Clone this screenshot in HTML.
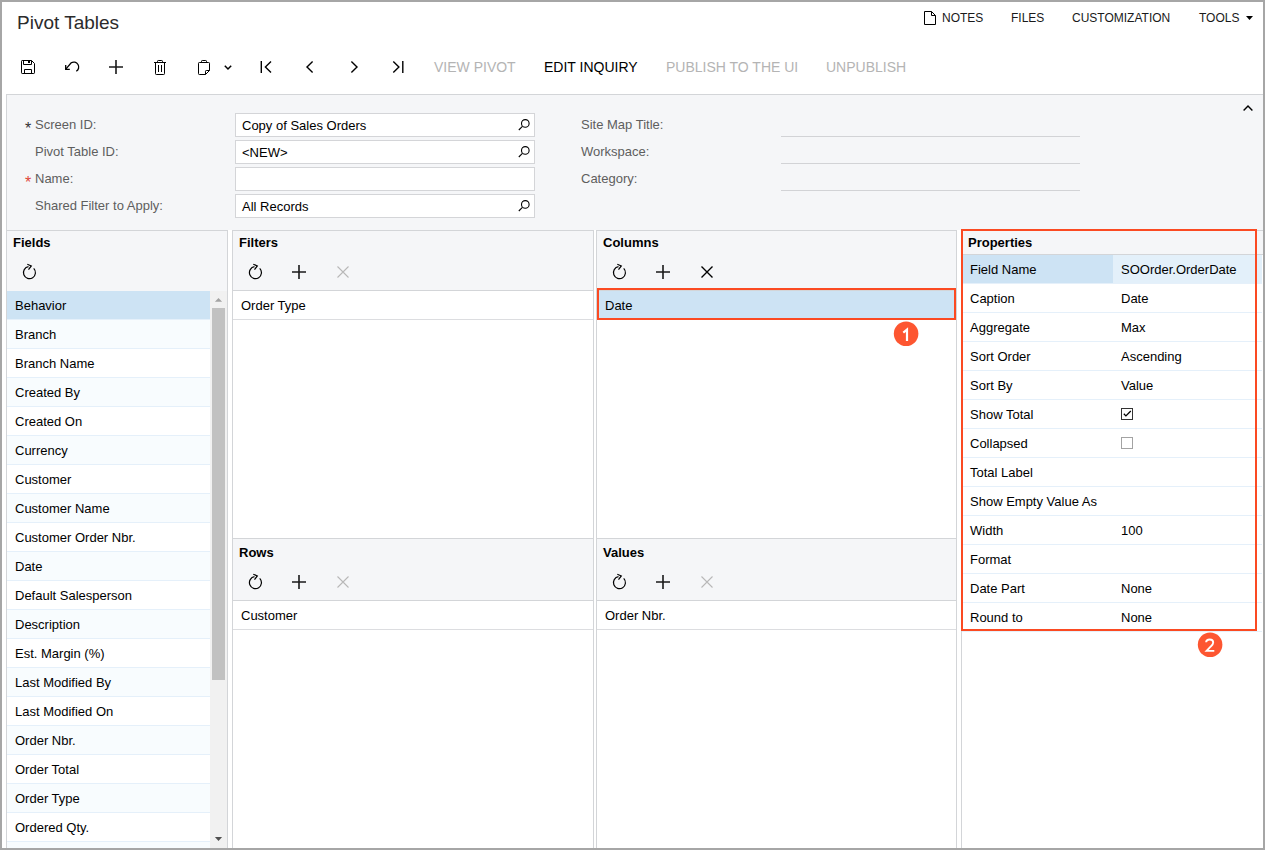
<!DOCTYPE html><html><head><meta charset="utf-8"><style>*{box-sizing:border-box;margin:0;padding:0}
html,body{width:1265px;height:850px;overflow:hidden;background:#fff}
body{position:relative;font-family:"Liberation Sans",sans-serif;font-size:13px;color:#000}
.a{position:absolute}
.t{position:absolute;white-space:pre}
#frame{position:absolute;left:0;top:0;width:1265px;height:850px;border:2px solid #a6a6a6}
.tb{font-size:14px;line-height:20px}
.dis{color:#b4b4b4}
.lnk{font-size:12px;line-height:16px;color:#1a1a1a}
.lbl{font-size:13px;line-height:17px;color:#5e5e5e}
.form{left:6px;top:94px;width:1259px;height:136px;background:#f5f6f8;border-top:1px solid #d3d5d8;border-left:1px solid #d3d5d8}
.inp{position:absolute;left:235px;width:300px;height:24px;background:#fff;border:1px solid #d4d5d8}
.inp span{position:absolute;left:6px;top:3px;line-height:17px;font-size:13px;color:#000;white-space:pre}
.ul{position:absolute;left:781px;width:299px;height:1px;background:#d2d3d6}
.pnl{position:absolute;border:1px solid #d3d5d8;background:#fff;overflow:hidden}
.ph{position:absolute;left:0;right:0;top:0;background:#f5f6f8;border-bottom:1px solid #d3d5d8}
.hd{position:absolute;left:6px;font-weight:bold;font-size:13px;line-height:17px;white-space:pre}
.frow{position:absolute;left:0;width:203px;height:29px;border-bottom:1px solid #e5f0fa;white-space:pre;line-height:30px;padding-left:8px}
.grow{position:absolute;left:0;right:0;height:29px;border-bottom:1px solid #dcdde0;white-space:pre;line-height:30px;padding-left:8px}
.alt{background:#f8fcfe}
.sel{background:#cde3f4}
.sbt{position:absolute;left:203px;top:60px;width:17px;height:600px;background:#f1f1f1}
.sbth{position:absolute;left:205px;top:77px;width:13px;height:372px;background:#c1c1c1}
.prow{position:absolute;left:0;width:300px;height:29px;border-bottom:1px solid #e5f0fa}
.pk{position:absolute;left:0;top:0;width:151px;height:28px;line-height:30px;padding-left:8px;white-space:pre}
.pv{position:absolute;left:151px;top:0;right:0;height:28px;line-height:30px;padding-left:8px;white-space:pre}
.redbox{border:2px solid #fb4a22}
</style></head><body>
<div id="page"></div>
<div class="t" style="left:17px;top:12px;font-size:19px;line-height:21px;color:#2b2b2b">Pivot Tables</div>
<div class="t lnk" style="left:942px;top:10px">NOTES</div>
<div class="t lnk" style="left:1011px;top:10px">FILES</div>
<div class="t lnk" style="left:1072px;top:10px">CUSTOMIZATION</div>
<div class="t lnk" style="left:1199px;top:10px">TOOLS</div>
<div class="t tb dis" style="left:434px;top:57px">VIEW PIVOT</div>
<div class="t tb " style="left:544px;top:57px">EDIT INQUIRY</div>
<div class="t tb dis" style="left:666px;top:57px">PUBLISH TO THE UI</div>
<div class="t tb dis" style="left:826px;top:57px">UNPUBLISH</div>
<div class="a form"></div>
<div class="t lbl" style="left:35px;top:116px">Screen ID:</div>
<div class="t" style="left:25px;top:120px;font-size:16px;line-height:17px;color:#333">*</div>
<div class="t lbl" style="left:35px;top:143px">Pivot Table ID:</div>
<div class="t lbl" style="left:35px;top:170px">Name:</div>
<div class="t" style="left:25px;top:174px;font-size:16px;line-height:17px;color:#e0483a">*</div>
<div class="t lbl" style="left:35px;top:197px">Shared Filter to Apply:</div>
<div class="inp" style="top:113px"><span>Copy of Sales Orders</span></div>
<div class="inp" style="top:140px"><span>&lt;NEW&gt;</span></div>
<div class="inp" style="top:167px"><span></span></div>
<div class="inp" style="top:194px"><span>All Records</span></div>
<div class="t lbl" style="left:581px;top:116px">Site Map Title:</div>
<div class="t lbl" style="left:581px;top:143px">Workspace:</div>
<div class="t lbl" style="left:581px;top:170px">Category:</div>
<div class="ul" style="top:136px"></div>
<div class="ul" style="top:163px"></div>
<div class="ul" style="top:190px"></div>
<div class="pnl" style="left:6px;top:230px;width:222px;height:640px"><div class="ph" style="height:61px"></div><div class="hd" style="top:3px">Fields</div><div class="frow sel" style="top:60px">Behavior</div><div class="frow alt" style="top:89px">Branch</div><div class="frow " style="top:118px">Branch Name</div><div class="frow alt" style="top:147px">Created By</div><div class="frow " style="top:176px">Created On</div><div class="frow alt" style="top:205px">Currency</div><div class="frow " style="top:234px">Customer</div><div class="frow alt" style="top:263px">Customer Name</div><div class="frow " style="top:292px">Customer Order Nbr.</div><div class="frow alt" style="top:321px">Date</div><div class="frow " style="top:350px">Default Salesperson</div><div class="frow alt" style="top:379px">Description</div><div class="frow " style="top:408px">Est. Margin (%)</div><div class="frow alt" style="top:437px">Last Modified By</div><div class="frow " style="top:466px">Last Modified On</div><div class="frow alt" style="top:495px">Order Nbr.</div><div class="frow " style="top:524px">Order Total</div><div class="frow alt" style="top:553px">Order Type</div><div class="frow " style="top:582px">Ordered Qty.</div><div class="frow alt" style="top:611px"></div><div class="sbt"></div><div class="sbth"></div></div>
<div class="pnl" style="left:232px;top:230px;width:362px;height:309px"><div class="ph" style="height:60px"></div><div class="hd" style="top:3px">Filters</div><div class="grow" style="top:60px">Order Type</div></div>
<div class="pnl" style="left:232px;top:538px;width:362px;height:320px"><div class="ph" style="height:62px"></div><div class="hd" style="top:5px">Rows</div><div class="grow" style="top:62px">Customer</div></div>
<div class="pnl" style="left:596px;top:230px;width:361px;height:309px"><div class="ph" style="height:60px"></div><div class="hd" style="top:3px">Columns</div><div class="grow sel" style="top:60px;border-bottom-color:#cde3f4">Date</div></div>
<div class="pnl" style="left:596px;top:538px;width:361px;height:320px"><div class="ph" style="height:62px"></div><div class="hd" style="top:5px">Values</div><div class="grow" style="top:62px">Order Nbr.</div></div>
<div class="pnl" style="left:961px;top:230px;width:310px;height:640px"><div class="ph" style="height:24px"></div><div class="hd" style="top:3px">Properties</div><div class="prow" style="top:24px;background:#e3f0fa"><div class="pk" style="background:#cde3f4">Field Name</div><div class="pv">SOOrder.OrderDate</div></div><div class="prow" style="top:53px"><div class="pk">Caption</div><div class="pv">Date</div></div><div class="prow" style="top:82px"><div class="pk">Aggregate</div><div class="pv">Max</div></div><div class="prow" style="top:111px"><div class="pk">Sort Order</div><div class="pv">Ascending</div></div><div class="prow" style="top:140px"><div class="pk">Sort By</div><div class="pv">Value</div></div><div class="prow" style="top:169px"><div class="pk">Show Total</div><div class="pv"></div></div><div class="prow" style="top:198px"><div class="pk">Collapsed</div><div class="pv"></div></div><div class="prow" style="top:227px"><div class="pk">Total Label</div><div class="pv"></div></div><div class="prow" style="top:256px"><div class="pk">Show Empty Value As</div><div class="pv"></div></div><div class="prow" style="top:285px"><div class="pk">Width</div><div class="pv">100</div></div><div class="prow" style="top:314px"><div class="pk">Format</div><div class="pv"></div></div><div class="prow" style="top:343px"><div class="pk">Date Part</div><div class="pv">None</div></div><div class="prow" style="top:372px"><div class="pk">Round to</div><div class="pv">None</div></div></div>
<div class="a redbox" style="left:961px;top:229px;width:296px;height:402px"></div>
<div class="a redbox" style="left:597px;top:288px;width:359px;height:32px"></div>
<svg class="a" style="left:0;top:0" width="1265" height="850"><g fill="none" stroke="#000" stroke-width="1"><path d="M21.5,61.2 Q21.5,60.5 22.2,60.5 H31.5 L34.5,63.5 V72.8 Q34.5,73.5 33.8,73.5 H22.2 Q21.5,73.5 21.5,72.8 Z"/><path d="M23.5,60.5 V64.5 H31.5 V60.5"/><path d="M24.5,73.5 V69.5 H31.5 V73.5"/></g><rect x="28" y="61" width="2" height="2" fill="#000"/><g fill="none" stroke="#000" stroke-width="1.3"><path d="M65.8,69.2 L71.2,62.8 A4.9,4.9 0 1 1 76.3,71.3"/><path d="M65.7,65 V69.4 H69.8"/></g><g fill="none" stroke="#1a1a1a" stroke-width="1.6"><path d="M116,60 V74 M109,67 H123"/></g><g fill="none" stroke="#000" stroke-width="1"><path d="M154,62.5 H166"/><path d="M157.5,62.5 V61.3 Q157.5,60.5 158.3,60.5 H161.7 Q162.5,60.5 162.5,61.3 V62.5"/><path d="M155.5,62.5 V73.7 Q155.5,74.5 156.3,74.5 H163.7 Q164.5,74.5 164.5,73.7 V62.5"/><path d="M158.5,65 V72 M161.5,65 V72"/></g><g fill="none" stroke="#000" stroke-width="1"><path d="M205.5,74.5 H199.3 Q198.5,74.5 198.5,73.7 V63.3 Q198.5,62.5 199.3,62.5 H208.7 Q209.5,62.5 209.5,63.3 V70.5 L205.5,74.5"/><path d="M205.5,74.5 V71.3 Q205.5,70.5 206.3,70.5 H209.5"/><path d="M201.5,62.5 V61.3 Q201.5,60.5 202.3,60.5 H205.7 Q206.5,60.5 206.5,61.3 V62.5"/></g><path d="M224.8,65.8 L228,69 L231.2,65.8" fill="none" stroke="#000" stroke-width="1.5"/><g fill="none" stroke="#000" stroke-width="1.4"><path d="M261.3,61 V73 M271,61.6 L265.4,67 L271,72.4"/><path d="M312.6,61.6 L307,67 L312.6,72.4"/><path d="M351.4,61.6 L357,67 L351.4,72.4"/><path d="M393.3,61.6 L398.9,67 L393.3,72.4 M402.8,61 V73"/></g><g fill="none" stroke="#000" stroke-width="1"><path d="M924.5,11.5 H931.5 L935.5,15.5 V24.5 H924.5 Z M931.5,11.5 V15.5 H935.5"/></g><path d="M1246,16 H1253 L1249.5,20 Z" fill="#000"/><path d="M1243.6,110.4 L1248,106 L1252.4,110.4" fill="none" stroke="#000" stroke-width="1.4"/><g fill="none" stroke="#000" stroke-width="1.1"><circle cx="525.3" cy="123.4" r="3.8"/><path d="M522.4,126.4 L518.8,130.0"/></g><g fill="none" stroke="#000" stroke-width="1.1"><circle cx="525.3" cy="150.4" r="3.8"/><path d="M522.4,153.4 L518.8,157.0"/></g><g fill="none" stroke="#000" stroke-width="1.1"><circle cx="525.3" cy="204.4" r="3.8"/><path d="M522.4,207.4 L518.8,211.0"/></g><g fill="none" stroke="#000" stroke-width="1.2"><path d="M33.7,268.40000000000003 A6,6 0 1 1 28.5,266.70000000000005"/><path d="M27.3,264.20000000000005 L31.3,265.90000000000003 L28.5,269.6"/></g><g fill="none" stroke="#000" stroke-width="1.2"><path d="M259.7,268.40000000000003 A6,6 0 1 1 254.5,266.70000000000005"/><path d="M253.3,264.20000000000005 L257.3,265.90000000000003 L254.5,269.6"/></g><path d="M299,265.0 V279.0 M292,272.0 H306" fill="none" stroke="#1a1a1a" stroke-width="1.6"/><path d="M337.5,266.5 L348.5,277.5 M348.5,266.5 L337.5,277.5" fill="none" stroke="#b8b8b8" stroke-width="1.1"/><g fill="none" stroke="#000" stroke-width="1.2"><path d="M623.7,268.40000000000003 A6,6 0 1 1 618.5,266.70000000000005"/><path d="M617.3,264.20000000000005 L621.3,265.90000000000003 L618.5,269.6"/></g><path d="M663,265.0 V279.0 M656,272.0 H670" fill="none" stroke="#1a1a1a" stroke-width="1.6"/><path d="M701.5,266.5 L712.5,277.5 M712.5,266.5 L701.5,277.5" fill="none" stroke="#000" stroke-width="1.4"/><g fill="none" stroke="#000" stroke-width="1.2"><path d="M259.7,578.4 A6,6 0 1 1 254.5,576.7"/><path d="M253.3,574.2 L257.3,575.9 L254.5,579.6"/></g><path d="M299,575.0 V589.0 M292,582.0 H306" fill="none" stroke="#1a1a1a" stroke-width="1.6"/><path d="M337.5,576.5 L348.5,587.5 M348.5,576.5 L337.5,587.5" fill="none" stroke="#b8b8b8" stroke-width="1.1"/><g fill="none" stroke="#000" stroke-width="1.2"><path d="M623.7,578.4 A6,6 0 1 1 618.5,576.7"/><path d="M617.3,574.2 L621.3,575.9 L618.5,579.6"/></g><path d="M663,575.0 V589.0 M656,582.0 H670" fill="none" stroke="#1a1a1a" stroke-width="1.6"/><path d="M701.5,576.5 L712.5,587.5 M712.5,576.5 L701.5,587.5" fill="none" stroke="#b8b8b8" stroke-width="1.1"/><rect x="1121.5" y="408.5" width="11" height="11" fill="#fff" stroke="#333" stroke-width="1"/><path d="M1123.8,413.8 L1125.9,415.9 L1130.8,411" fill="none" stroke="#000" stroke-width="1.3"/><rect x="1121.5" y="437.5" width="11" height="11" fill="#fff" stroke="#a3a3a3" stroke-width="1"/><path d="M214.9,301.8 H222.1 L218.5,297.9 Z" fill="#a3a3a3"/><path d="M214.9,837 H222.1 L218.5,841.1 Z" fill="#505050"/><circle cx="906.1" cy="333.7" r="12.3" fill="#fd5631"/><path d="M903.3,332.6 L907,329.6 V341" fill="none" stroke="#fff" stroke-width="2.2" stroke-linejoin="miter"/><circle cx="1210.1" cy="644.7" r="12.3" fill="#fd5631"/><path d="M1206.1,642.2 Q1206.3,639.5 1209.7,639.5 Q1213.2,639.5 1213.2,642.6 Q1213.2,644.4 1210.8,646.4 L1206.6,650.9 H1214.3" fill="none" stroke="#fff" stroke-width="1.9"/></svg>
<div id="frame"></div>
</body></html>
